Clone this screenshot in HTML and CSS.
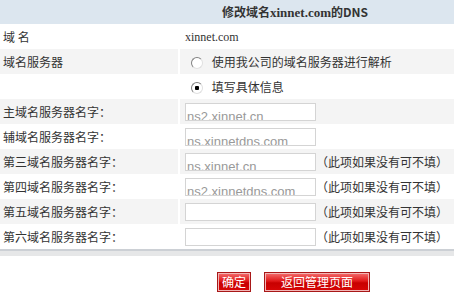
FILE: index.html
```html
<!doctype html>
<html lang="zh-CN">
<head>
    <meta charset="utf-8">
    <title>修改域名DNS</title>
    <link rel="stylesheet" href="styles.css">
</head>
<body>
    <form class="dns-form">
        <table class="dns-table">
            <colgroup>
                <col class="col-label">
                <col class="col-value">
                <col class="col-note">
            </colgroup>
            <tr class="head">
                <th colspan="3">修改域名<span class="latin">xinnet.com</span>的DNS</th>
            </tr>
            <tr>
                <td class="label">域&nbsp;名</td>
                <td colspan="2" class="value"><span class="latin">xinnet.com</span></td>
            </tr>
            <tr class="alt">
                <td class="label">域名服务器</td>
                <td colspan="2" class="value">
                    <label class="radio"><input type="radio" name="mode"> 使用我公司的域名服务器进行解析</label>
                </td>
            </tr>
            <tr>
                <td class="label"></td>
                <td colspan="2" class="value">
                    <label class="radio"><input type="radio" name="mode" checked> 填写具体信息</label>
                </td>
            </tr>
            <tr class="alt">
                <td class="label">主域名服务器名字：</td>
                <td class="value"><input type="text" class="ns" value="ns2.xinnet.cn"></td>
                <td></td>
            </tr>
            <tr>
                <td class="label">辅域名服务器名字：</td>
                <td class="value"><input type="text" class="ns" value="ns.xinnetdns.com"></td>
                <td></td>
            </tr>
            <tr class="alt">
                <td class="label">第三域名服务器名字：</td>
                <td class="value"><input type="text" class="ns" value="ns.xinnet.cn"></td>
                <td class="note">（此项如果没有可不填）</td>
            </tr>
            <tr>
                <td class="label">第四域名服务器名字：</td>
                <td class="value"><input type="text" class="ns" value="ns2.xinnetdns.com"></td>
                <td class="note">（此项如果没有可不填）</td>
            </tr>
            <tr class="alt">
                <td class="label">第五域名服务器名字：</td>
                <td class="value"><input type="text" class="ns" value=""></td>
                <td class="note">（此项如果没有可不填）</td>
            </tr>
            <tr>
                <td class="label">第六域名服务器名字：</td>
                <td class="value"><input type="text" class="ns" value=""></td>
                <td class="note">（此项如果没有可不填）</td>
            </tr>
        </table>
        <div class="bar"></div>
        <div class="actions">
            <button type="submit" class="btn">确定</button>
            <button type="button" class="btn">返回管理页面</button>
        </div>
    </form>
</body>
</html>
```

FILE: styles.css
```css
body {
    margin: 0;
    background: #fff;
    font-family: "Noto Sans CJK SC", "Liberation Sans", sans-serif;
    font-size: 12px;
    color: #333;
}
.dns-table {
    width: 454px;
    border-collapse: collapse;
    table-layout: fixed;
}
.col-label {
    width: 179px;
}
.col-value {
    width: 137px;
}
.col-note {
    width: 138px;
}
.dns-table td,
.dns-table th {
    padding: 0;
    height: 25px;
    line-height: 16px;
    vertical-align: middle;
    white-space: nowrap;
    overflow: hidden;
}
.head th {
    height: 24px;
    background: #dce6ef;
    font-weight: bold;
    text-align: center;
    padding-left: 136px;
}
.head .latin {
    font-family: "Liberation Serif", serif;
    font-size: 13px;
}
.latin {
    font-family: "Liberation Serif", serif;
}
.label {
    padding-left: 3px !important;
    border-right: 2px solid #fff;
}
.value {
    padding-left: 5px !important;
}
.alt td {
    background: #f4f4f4;
}
.radio input {
    -webkit-appearance: none;
    appearance: none;
    width: 12px;
    height: 12px;
    margin: 0 6px 0 6px;
    vertical-align: -2px;
    border-radius: 50%;
    border: 1px solid;
    border-color: #808080 #e0e0e0 #e0e0e0 #808080;
    background: #fff;
    box-sizing: border-box;
}
.radio input:checked {
    background: radial-gradient(circle, #000 0, #000 2px, #fff 2.5px);
}
input.ns {
    box-sizing: border-box;
    width: 131px;
    height: 18px;
    margin: 0;
    padding: 9px 0 0 1px;
    border: 1px solid #d4d4d4;
    font-family: "Liberation Sans", Arial, sans-serif;
    font-size: 13px;
    color: #999;
    background: #fff;
    vertical-align: middle;
}
.note {
    padding-left: 0;
}
.bar {
    height: 5px;
    border-top: 2px solid #ccd0d5;
    background: #e6e7e8;
}
.actions {
    display: flex;
    justify-content: center;
    gap: 13px;
    padding: 16px 0 0 133px;
}
.btn {
    height: 20px;
    padding: 0 4px;
    border: 1px solid #a81818;
    box-shadow: inset 0 0 0 1px #f2b6b6;
    background: linear-gradient(#f47070, #e01818 45%, #c80000 55%, #d80606);
    color: #fff;
    font-family: "Noto Sans CJK SC", sans-serif;
    font-size: 12px;
    line-height: 16px;
    cursor: pointer;
}
.btn + .btn {
    padding: 0 16px;
}
```
